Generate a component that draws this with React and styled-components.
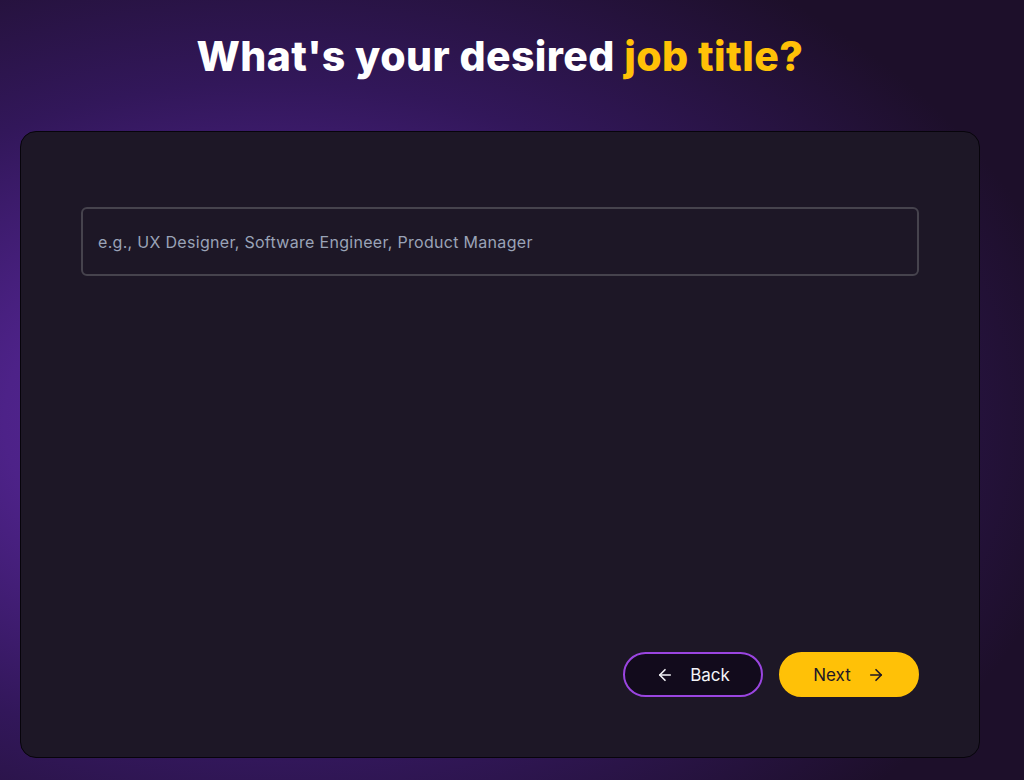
import React, { useState } from "react";
import styled, { createGlobalStyle } from "styled-components";

const GlobalStyle = createGlobalStyle`
  html, body {
    margin: 0;
    padding: 0;
    height: 100%;
  }
  body {
    font-family: "Inter", "Noto Sans", sans-serif;
    background: #1c0f28;
  }
`;

const Page = styled.div`
  min-height: 780px;
  box-sizing: border-box;
  padding: 24px 44px 22px 20px;
  background:
    radial-gradient(ellipse 80% 70% at 26% 54%, #5e28a4 0%, #4d2288 32%, #32175a 62%, #1d0f2a 100%);
  display: flex;
  flex-direction: column;
  align-items: center;
`;

const Title = styled.h1`
  margin: 0;
  font-size: 41px;
  font-weight: 800;
  line-height: 64px;
  color: #ffffff;
  letter-spacing: 0.4px;
  text-align: center;
`;

const Highlight = styled.span`
  color: #ffc107;
`;

const Card = styled.div`
  margin-top: 43px;
  width: 100%;
  height: 627px;
  box-sizing: border-box;
  background: #1d1726;
  border: 1px solid #07040b;
  border-radius: 16px;
  padding: 75px 60px 60px;
  display: flex;
  flex-direction: column;
  justify-content: space-between;
`;

const Input = styled.input`
  width: 100%;
  height: 69px;
  box-sizing: border-box;
  background: transparent;
  border: 2px solid #46434d;
  border-radius: 6px;
  padding: 0 15px;
  font-family: "Inter", "Noto Sans", sans-serif;
  font-size: 16px;
  letter-spacing: 0.3px;
  color: #e8e8ee;
  outline: none;

  &::placeholder {
    color: #9aa3b7;
  }
`;

const Actions = styled.div`
  display: flex;
  justify-content: flex-end;
  gap: 16px;
`;

const NavButton = styled.button`
  width: 140px;
  height: 45px;
  box-sizing: border-box;
  border-radius: 24px;
  display: flex;
  align-items: center;
  justify-content: center;
  gap: 16px;
  font-family: "Inter", "Noto Sans", sans-serif;
  font-size: 17px;
  cursor: pointer;
  border: 2px solid ${({ primary }) => (primary ? "#ffc107" : "#9a45e0")};
  background: ${({ primary }) => (primary ? "#ffc107" : "#120b1c")};
  color: ${({ primary }) => (primary ? "#1d1726" : "#f4f4f8")};
`;

const Arrow = ({ dir }) => (
  <svg width="18" height="18" viewBox="0 0 24 24" fill="none" stroke="currentColor" strokeWidth="2.2" strokeLinecap="round" strokeLinejoin="round">
    {dir === "left" ? (
      <>
        <path d="M19 12H5" />
        <path d="M12 19l-7-7 7-7" />
      </>
    ) : (
      <>
        <path d="M5 12h14" />
        <path d="M12 5l7 7-7 7" />
      </>
    )}
  </svg>
);

const App = () => {
  const [title, setTitle] = useState("");
  return (
    <>
      <GlobalStyle />
      <Page>
        <Title>
          What's your desired <Highlight>job title?</Highlight>
        </Title>
        <Card>
          <Input
            type="text"
            value={title}
            onChange={(e) => setTitle(e.target.value)}
            placeholder="e.g., UX Designer, Software Engineer, Product Manager"
          />
          <Actions>
            <NavButton type="button">
              <Arrow dir="left" />
              Back
            </NavButton>
            <NavButton type="button" primary>
              Next
              <Arrow dir="right" />
            </NavButton>
          </Actions>
        </Card>
      </Page>
    </>
  );
};

export default App;
